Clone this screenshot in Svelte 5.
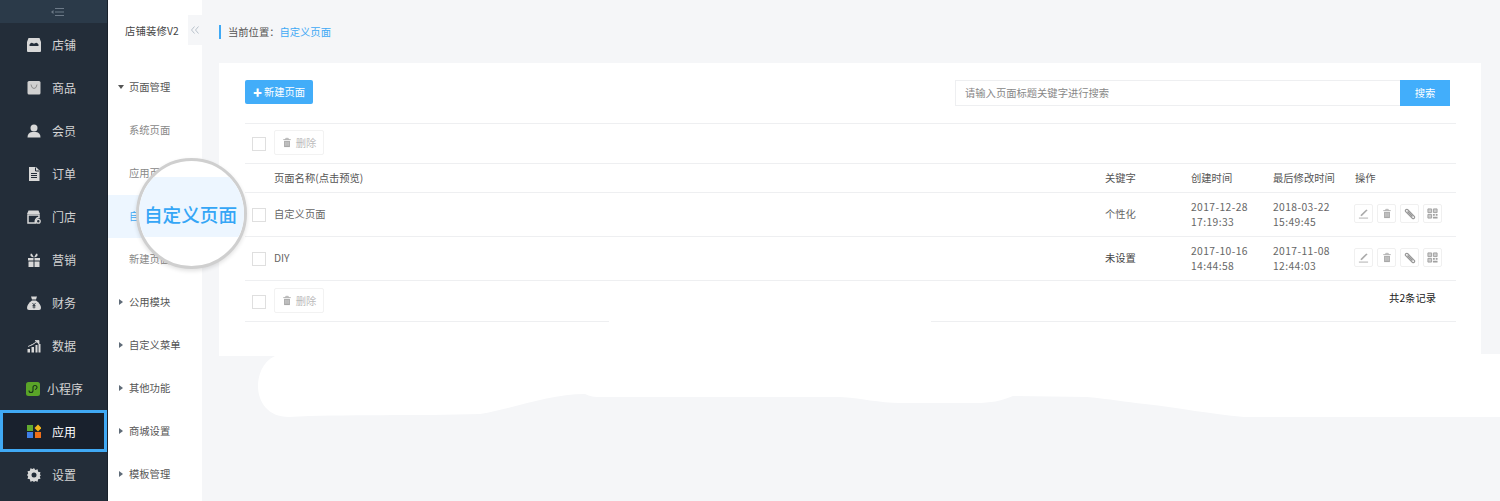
<script>
  const nav = [
    { id: 'shop', name: '店铺' },
    { id: 'goods', name: '商品' },
    { id: 'user', name: '会员' },
    { id: 'order', name: '订单' },
    { id: 'store', name: '门店' },
    { id: 'gift', name: '营销' },
    { id: 'money', name: '财务' },
    { id: 'chart', name: '数据' },
    { id: 'mini', name: '小程序' },
    { id: 'apps', name: '应用' },
    { id: 'gear', name: '设置' }
  ];

  const menu = [
    { name: '页面管理', arrow: 'down' },
    { name: '系统页面' },
    { name: '应用页面' },
    { name: '自定义页面', active: true },
    { name: '新建页面' },
    { name: '公用模块', arrow: 'right' },
    { name: '自定义菜单', arrow: 'right' },
    { name: '其他功能', arrow: 'right' },
    { name: '商城设置', arrow: 'right' },
    { name: '模板管理', arrow: 'right' }
  ];

  const pages = [
    { title: '自定义页面', keyword: '个性化', created: ['2017-12-28', '17:19:33'], modified: ['2018-03-22', '15:49:45'] },
    { title: 'DIY', keyword: '未设置', unset: true, created: ['2017-10-16', '14:44:58'], modified: ['2017-11-08', '12:44:03'] }
  ];
</script>

{#snippet trash()}
  <svg viewBox="0 0 12 12" width="10" height="11">
    <path d="M1.500 2.500h9M4.500 2.500V1h3v1.500" fill="none" stroke="#a8a8a8" stroke-width="1" />
    <path d="M2.500 4h7v7.500h-7z" fill="#a8a8a8" />
    <path d="M4.500 5v5M6 5v5M7.500 5v5" stroke="#e6e6e6" stroke-width=".6" />
  </svg>
{/snippet}

{#snippet navIcon(id)}
  <svg viewBox="0 0 14 14" width="14" height="14">
    {#if id === 'shop'}
      <path d="M1.500 0h11L14 4v9a1 1 0 0 1-1 1H1a1 1 0 0 1-1-1V4z" fill="#d8d8d8" />
      <path d="M2.500 6.500q1.500-2.500 3 -1.500q1.500 1 3 0q1.500-1 3 1.500v1.500h-9z" fill="#232d39" />
    {:else if id === 'goods'}
      <rect x="0.500" width="13" height="13.500" rx="1.500" fill="#d0d0d0" />
      <path d="M4 3.500q.5 4 3 4t3-4" fill="none" stroke="#8c8c8c" stroke-width="1" />
    {:else if id === 'user'}
      <circle cx="7" cy="4" r="3.500" fill="#d8d8d8" />
      <path d="M0.500 13.500q0-5 4.500-5.500h4q4.500.5 4.500 5.500z" fill="#d8d8d8" />
    {:else if id === 'order'}
      <path d="M2 0h7l3.500 3.500V14H2z" fill="#d8d8d8" />
      <path d="M8.500 0.500V4H12M4 6.500h6M4 8.500h6M4 10.500h6" fill="none" stroke="#232d39" stroke-width="1" />
    {:else if id === 'store'}
      <path d="M1.500 0.500h10L13 4H0z" fill="#d8d8d8" />
      <path d="M1 5h11v2.500a4 4 0 0 0-3.500 5.500H1z" fill="none" stroke="#d8d8d8" stroke-width="1.500" />
      <circle cx="11.300" cy="11.300" r="1.900" fill="none" stroke="#d8d8d8" stroke-width="1.300" />
    {:else if id === 'gift'}
      <path d="M1 5h5.500v2.500H1zM7.500 5H13v2.500H7.500zM1.500 8.500h5V14h-5zM7.500 8.500h5V14h-5z" fill="#d8d8d8" />
      <path d="M6.500 4.500Q3 4 3.500 1.500T6.500 3.500zM7.500 4.500Q11 4 10.500 1.500T7.500 3.500z" fill="#d8d8d8" />
    {:else if id === 'money'}
      <path d="M4 0.500h6L9 3.500H5z" fill="#d8d8d8" />
      <path d="M5 4.500h4q5 3.500 5 7.500 0 2-2 2H2q-2 0-2-2 0-4 5-7.500z" fill="#d8d8d8" />
      <path d="M5.500 7l1.500 2 1.500-2M5.500 9.500h3M5.500 11h3M7 9v3.500" fill="none" stroke="#232d39" stroke-width=".8" />
    {:else if id === 'chart'}
      <path d="M0.500 10h2.500v3.500H0.500zM4.500 8h2.500v5.500H4.500zM8.500 6h2v7.500h-2zM11.500 5h2v8.500h-2z" fill="#d8d8d8" />
      <path d="M1 7.500Q6 6 10 2.500M8 1.500h4v3.500z" fill="#d8d8d8" stroke="#d8d8d8" stroke-width=".8" />
    {:else if id === 'mini'}
      <rect width="14" height="14" rx="2.500" fill="#5aa428" />
      <path d="M3 8.500a2 2 0 1 0 4 0V5.500a2 2 0 1 1 4 0q0 1.500-2 2" fill="none" stroke="#17331a" stroke-width="1.100" />
    {:else if id === 'apps'}
      <rect y="1" width="6" height="6" fill="#62ab30" />
      <path d="M11 0.500l3.500 3.500L11 7.500 7.500 4z" fill="#f2b51c" />
      <rect y="8" width="6" height="6" fill="#3f7fe6" />
      <rect x="8" y="8" width="6" height="6" fill="#ee6f1a" />
    {:else}
      <path d="M7 0l1.300 2 2.300-.7.500 2.400 2.400.5-.700 2.300L14 7l-1.200 1.500.700 2.300-2.400.5-.500 2.400-2.300-.700L7 14l-1.300-1-2.300.7-.500-2.400-2.400-.500.700-2.300L0 7l1.200-1.500-.700-2.300 2.400-.500.500-2.400 2.300.700z" fill="#d8d8d8" />
      <circle cx="7" cy="7" r="2.500" fill="#232d39" />
    {/if}
  </svg>
{/snippet}

<div class="page">
  <aside class="side">
    <div class="side-top">
      <svg viewBox="0 0 13 8" width="13" height="8">
        <path d="M0 4l2.500-2v4z" fill="#6d7a88" />
        <path d="M4 .5h9M4 4h9M4 7.500h9" stroke="#6d7a88" stroke-width="1" />
      </svg>
    </div>
    {#each nav as item}
      <div class="nav-item" class:mini={item.id === 'mini'} class:current={item.id === 'apps'}>
        {@render navIcon(item.id)}
        <span>{item.name}</span>
      </div>
    {/each}
  </aside>

  <nav class="sub">
    <div class="sub-title">店铺装修V2</div>
    <div class="collapse">
      <svg viewBox="0 0 8 8" width="8" height="8">
        <path d="M3.500.5L.5 4l3 3.500M7.500.5L4.500 4l3 3.500" fill="none" stroke="#b9c2cc" stroke-width="1" />
      </svg>
    </div>
    <div class="sub-list">
      {#each menu as item}
        <div class="sub-item" class:on={item.active} class:group={item.arrow}>
          {#if item.arrow === 'down'}
            <i class="arrow-down"></i>
          {:else if item.arrow === 'right'}
            <i class="arrow-right"></i>
          {/if}
          {item.name}
        </div>
      {/each}
    </div>
  </nav>

  <main class="main">
    <div class="crumb">当前位置：<span>自定义页面</span></div>

    <section class="card">
      <div class="top-bar">
        <button class="btn-new"><b>✚</b>新建页面</button>
        <div class="search">
          <input placeholder="请输入页面标题关键字进行搜索" />
          <button>搜索</button>
        </div>
      </div>

      <div class="tool-row first">
        <i class="check"></i>
        <button class="btn-del">{@render trash()}删除</button>
      </div>

      <div class="row head">
        <span></span>
        <span>页面名称(点击预览)</span>
        <span>关键字</span>
        <span>创建时间</span>
        <span>最后修改时间</span>
        <span>操作</span>
      </div>

      {#each pages as page}
        <div class="row body">
          <i class="check"></i>
          <span>{page.title}</span>
          <span class:unset={page.unset}>{page.keyword}</span>
          <span class="date">{page.created[0]}<br />{page.created[1]}</span>
          <span class="date">{page.modified[0]}<br />{page.modified[1]}</span>
          <div class="ops">
            <button aria-label="编辑">
              <svg viewBox="0 0 12 12" width="11" height="11">
                <path d="M2.500 8L9 1.500l1.500 1L4 9z" fill="#aaa" />
                <path d="M1 11h10" fill="none" stroke="#aaa" stroke-width="1" />
              </svg>
            </button>
            <button aria-label="删除">{@render trash()}</button>
            <button aria-label="链接">
              <svg viewBox="0 0 12 12" width="12" height="12">
                <path d="M3.500 1.500l7 7a1.500 1.500 0 0 1-2 2l-7-7a1.500 1.500 0 0 1 2-2zM3.500 3.500l5 5" fill="none" stroke="#999" stroke-width="1.200" />
              </svg>
            </button>
            <button aria-label="二维码">
              <svg viewBox="0 0 12 12" width="11" height="11">
                <path d="M1 1h4v4H1zM7 1h4v4H7zM1 7h4v4H1z" fill="#ccc" stroke="#a0a0a0" stroke-width="1" />
                <path d="M6.500 6.500h2v2h-2zM9.500 6.500h2v2h-2zM6.500 9.500h5v2h-5z" fill="#a0a0a0" />
              </svg>
            </button>
          </div>
        </div>
      {/each}

      <div class="tool-row last">
        <i class="check"></i>
        <button class="btn-del">{@render trash()}删除</button>
        <span class="total">共2条记录</span>
      </div>
    </section>
  </main>

  <!-- white brush-out over the lower part of the page -->
  <svg class="brush" viewBox="0 0 1500 501" width="1500" height="501">
    <path d="M609 320h322v3H609z" fill="#fff" />
    <path
      d="M275 356C262 362 258 376 258 386C258 402 268 417 289 417C340 414 420 416 480 414C515 408 550 394 585 394C592 398 600 397 610 397L840 397C860 398 880 403 900 403L975 403C992 403 1000 401 1013 396L1087 397C1110 399 1125 402 1145 404C1180 408 1210 414 1244 417L1500 417V354H1481V356Z"
      fill="#fff"
    />
  </svg>

  <div class="lens"><div class="lens-band">自定义页面</div></div>
</div>

<style>
  :global(body) {
    margin: 0;
  }

  .page {
    position: relative;
    display: flex;
    width: 1500px;
    height: 501px;
    overflow: hidden;
    background: #f5f6f8;
    font-family: "Noto Sans CJK SC", "Liberation Sans", sans-serif;
    font-size: 10.3px;
    color: #666;
  }

  i {
    font-style: normal;
  }

  button {
    font-family: inherit;
  }

  .side {
    flex: none;
    width: 107px;
    background: #232d39;
    border-right: 1px solid #19212b;
    color: #d4d4d4;
    font-size: 12px;
  }

  .side-top {
    display: flex;
    justify-content: center;
    align-items: center;
    height: 23px;
    padding-left: 7px;
    box-sizing: border-box;
    background: #2b3a49;
  }

  .nav-item {
    display: flex;
    align-items: center;
    gap: 11px;
    height: 43px;
    padding-left: 27px;
    box-sizing: border-box;
  }

  .nav-item.mini {
    gap: 7px;
    padding-left: 26px;
  }

  .nav-item.current {
    height: 42px;
    margin-bottom: 1px;
    border: 3px solid #40a9f4;
    padding-left: 24px;
    background: #19212d;
    color: #fff;
  }

  .sub {
    position: relative;
    flex: none;
    width: 94px;
    background: #fff;
  }

  .sub-title {
    height: 66px;
    padding: 23px 0 0 17px;
    box-sizing: border-box;
    line-height: 16px;
    letter-spacing: 0.2px;
    color: #444;
  }

  .collapse {
    position: absolute;
    top: 15px;
    right: 0;
    display: flex;
    align-items: center;
    justify-content: center;
    width: 14px;
    height: 30px;
    background: #f5f6f8;
  }

  .sub-item {
    position: relative;
    display: flex;
    align-items: center;
    height: 43px;
    padding: 0 0 2px 21px;
    box-sizing: border-box;
    color: #888;
  }

  .sub-item.group {
    color: #555;
  }

  .sub-item.on {
    background: #edf6ff;
    color: #3fa9f5;
  }

  .arrow-down {
    position: absolute;
    left: 10px;
    border: 3.500px solid transparent;
    border-top: 4px solid #555;
    border-bottom: 0;
  }

  .arrow-right {
    position: absolute;
    left: 11px;
    border: 3.500px solid transparent;
    border-left: 4px solid #5f6b78;
    border-right: 0;
  }

  .main {
    flex: none;
    width: 1262px;
    margin-left: 17px;
  }

  .crumb {
    position: relative;
    height: 63px;
    padding: 23px 0 0 9px;
    box-sizing: border-box;
    line-height: 18px;
    color: #555;
  }

  .crumb::before {
    content: "";
    position: absolute;
    left: 0;
    top: 25px;
    width: 2px;
    height: 14px;
    background: #3fa9f5;
  }

  .crumb span {
    color: #3fa9f5;
  }

  .card {
    height: 293px;
    padding: 17px 25px 0 26px;
    box-sizing: border-box;
    background: #fff;
  }

  .top-bar {
    display: flex;
    justify-content: space-between;
    height: 43px;
    border-bottom: 1px solid #eeeff1;
  }

  .btn-new {
    width: 68px;
    height: 24px;
    padding: 0 0 2px;
    border: 0;
    border-radius: 2px;
    background: #42adf9;
    color: #fff;
    font-size: 10.3px;
  }

  .btn-new b {
    margin-right: 2px;
    font-size: 9px;
  }

  .search {
    display: flex;
    height: 26px;
    margin-right: 6px;
  }

  .search input {
    width: 445px;
    padding: 0 9px 2px;
    box-sizing: border-box;
    border: 1px solid #eeeff1;
    border-right: 0;
    outline: 0;
    font-family: inherit;
    font-size: 10.3px;
  }

  .search input::placeholder {
    color: #888;
  }

  .search button {
    width: 50px;
    padding: 0 0 2px;
    border: 0;
    background: #42aefb;
    color: #fff;
    font-size: 10.3px;
  }

  .tool-row {
    position: relative;
    display: flex;
    align-items: center;
    box-sizing: border-box;
    padding-left: 7px;
    border-bottom: 1px solid #eeeff1;
  }

  .tool-row.first {
    height: 40px;
    padding-bottom: 2px;
  }

  .tool-row.last {
    height: 41px;
    padding-bottom: 2px;
  }

  .check {
    flex: none;
    width: 14px;
    height: 14px;
    box-sizing: border-box;
    border: 1px solid #dfdfdf;
    background: #fff;
  }

  .tool-row .check {
    margin-top: 3px;
  }

  .btn-del {
    display: flex;
    align-items: center;
    justify-content: center;
    gap: 4px;
    width: 50px;
    height: 25px;
    margin-left: 8px;
    padding: 0;
    border: 1px solid #f2f2f2;
    border-radius: 2px;
    background: #fff;
    color: #bbb;
    font-size: 10.3px;
  }

  .total {
    position: absolute;
    right: 20px;
    top: 9px;
    color: #222;
  }

  .row {
    display: grid;
    grid-template-columns: 29px 831px 86px 82px 82px 1fr;
    align-items: center;
    box-sizing: border-box;
    padding-bottom: 2px;
    border-bottom: 1px solid #eeeff1;
  }

  .row.head {
    height: 29px;
    color: #555;
  }

  .row.body {
    height: 44px;
    line-height: 15px;
  }

  .row .check {
    margin: 2px 0 0 7px;
  }

  .date {
    letter-spacing: 0.4px;
  }

  .unset {
    color: #444;
  }

  .ops {
    display: flex;
    gap: 4px;
    margin-left: -1px;
  }

  .ops button {
    display: flex;
    align-items: center;
    justify-content: center;
    width: 19px;
    height: 19px;
    padding: 0;
    border: 1px solid #f0f0f0;
    border-radius: 2px;
    background: #fff;
  }

  .brush {
    position: absolute;
    left: 0;
    top: 0;
  }

  .lens {
    position: absolute;
    left: 136px;
    top: 158px;
    width: 111px;
    height: 111px;
    box-sizing: border-box;
    border: 3px solid #cfcfcf;
    border-radius: 50%;
    overflow: hidden;
    background: #fff;
    box-shadow: 0 2px 4px rgba(0, 0, 0, 0.12);
  }

  .lens-band {
    width: 100%;
    height: 60px;
    margin-top: 16px;
    padding-left: 5px;
    box-sizing: border-box;
    background: #edf6ff;
    color: #35a6f6;
    font-size: 18.600px;
    font-weight: 500;
    line-height: 74px;
    white-space: nowrap;
  }
</style>
